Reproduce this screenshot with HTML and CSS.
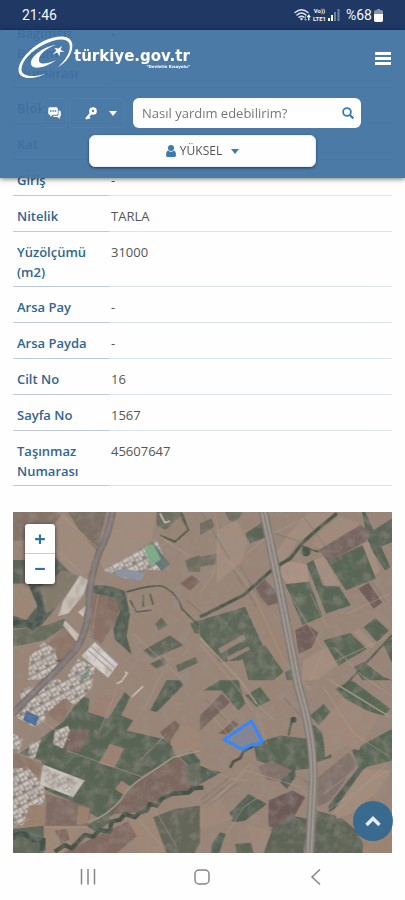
FILE: index.html
```html
<!DOCTYPE html>
<html lang="tr">
<head>
<meta charset="utf-8">
<meta name="viewport" content="width=device-width, initial-scale=1">
<title>türkiye.gov.tr</title>
<link rel="stylesheet" href="styles.css">
</head>
<body>
<div class="top">
  <div class="status">
    <span class="clock">21:46</span>
    <div class="status-icons">
      <svg class="wifi" viewBox="0 0 17 14" aria-hidden="true">
        <g fill="none" stroke="#dfe7f2" stroke-width="1.5" stroke-linecap="round"><path d="M1 4.5Q7.500-1 14 4.500M3 7Q7.500 3 12 7M5 9.300Q7.500 7.200 10 9.300"/></g>
        <circle cx="7.500" cy="11" r="1.200" fill="#dfe7f2"/>
        <path d="M11.500 8v4M10.200 11l1.300 1.700L12.800 11" fill="none" stroke="#8496b4"/>
        <path d="M14.800 12.500V7.500M13.300 9.200l1.500-1.900 1.500 1.900" fill="none" stroke="#fff" stroke-width="1.200"/>
      </svg>
      <span class="lte"><span>Vo))</span><span>LTE1</span></span>
      <svg class="signal" viewBox="0 0 12 12" aria-hidden="true"><path d="M0 9h2v3H0zM3 6h2v6H3z" fill="#fff"/><path d="M6 3h2v9H6zM9.500 0h2v12h-2z" fill="#71819e"/></svg>
      <span class="percent">%68</span>
      <svg class="battery" viewBox="0 0 9 13" aria-hidden="true"><path d="M3 0h3v1.500H3z" fill="#8792a8"/><rect x="0" y="1" width="9" height="12" rx="2" fill="#8792a8"/><path d="M0 5h9v6a2 2 0 0 1-2 2H2a2 2 0 0 1-2-2z" fill="#fff"/></svg>
    </div>
  </div>
  <header class="header">
    <div class="brand-row">
      <a class="brand" href="#" aria-label="türkiye.gov.tr">
        <svg class="mark" viewBox="0 0 56 44" aria-hidden="true">
          <path fill="#fff" fill-rule="evenodd" d="M27 38C17 43 4 44 1 37C-2 27 12 11 28 4C40-1 52-1 54 7C56 16 49 26 40 31C49 23 54 13 51 7C47 1 36 4 27 8C12 15 1 28 4 36C7 41 17 41 27 38Z"/>
          <path fill="#fff" d="M38 9C27 10 12 20 13 28C14 35 30 31 38 24C30 28 22 29 21 25C20 19 28 12 38 9Z"/>
          <path fill="#fff" d="M44 10l-1.500 4 4 1.500-4.500.5-.5 4.500-2-4-5 2 4-4-2-2.500 4 .5z"/>
        </svg>
        <span class="brand-text"><strong>türkiye.gov.tr</strong><small>"Devletin Kısayolu"</small></span>
      </a>
      <button class="menu" type="button" aria-label="Menü"><span></span><span></span><span></span></button>
    </div>
    <div class="tools">
      <button class="tool" type="button" aria-label="Mesajlar">
        <svg class="chat" viewBox="0 0 13 12" fill="#fff" aria-hidden="true"><path d="M10.500 3.500h.8A1.500 1.500 0 0 1 12.800 5v3.500A1.500 1.500 0 0 1 11.700 10v2L9.300 10H6.500A1.500 1.500 0 0 1 5 8.800h4a1.500 1.500 0 0 0 1.500-1.500z"/><path fill-rule="evenodd" d="M1.800.2h6.500a1.500 1.500 0 0 1 1.500 1.500v4.600a1.500 1.500 0 0 1-1.500 1.500H4.800L2.300 10V7.800h-.5A1.500 1.500 0 0 1 .3 6.300V1.700A1.500 1.500 0 0 1 1.800.2zM2 3.200v1.500h1.500V3.200zm2.400 0v1.500h1.400V3.200zm2.300 0v1.500h1.500V3.200z"/></svg>
      </button>
      <button class="tool tool-key" type="button" aria-label="Giriş seçenekleri">
        <svg class="key" viewBox="0 0 12 13" fill="none" stroke="#fff" aria-hidden="true"><circle cx="8" cy="4" r="2.500" stroke-width="2.700"/><path d="M6.200 6L1 12M2.500 9.500l2.200 1.800" stroke-width="2.200"/></svg>
        <span class="caret"></span>
      </button>
      <form class="search" role="search">
        <input type="search" aria-label="Arama" placeholder="Nasıl yardım edebilirim?">
        <button type="button" aria-label="Ara"><svg viewBox="0 0 12 12" fill="none" stroke="#3a7bb4" aria-hidden="true"><circle cx="5" cy="5" r="3.900" stroke-width="1.800"/><path d="M8 8l3.400 3.400" stroke-width="2.200"/></svg></button>
      </form>
    </div>
    <button class="user" type="button">
      <svg viewBox="0 0 10 12" fill="#3a7bb4" aria-hidden="true"><circle cx="5" cy="3" r="3"/><path d="M2.200 5.500Q5 8 7.800 5.500Q10 6.300 10 10.200Q10 12 8.500 12h-7Q0 12 0 10.200Q0 6.300 2.200 5.500z"/></svg>
      <span>YÜKSEL</span><span class="caret"></span>
    </button>
  </header>
</div>

<main class="content">
  <table class="details">
    <tbody>
      <tr><th scope="row">Bağımsız Bölüm Numarası</th><td>-</td></tr>
      <tr><th scope="row">Blok</th><td></td></tr>
      <tr><th scope="row">Kat</th><td></td></tr>
      <tr><th scope="row">Giriş</th><td>-</td></tr>
      <tr><th scope="row">Nitelik</th><td>TARLA</td></tr>
      <tr><th scope="row">Yüzölçümü (m2)</th><td>31000</td></tr>
      <tr><th scope="row">Arsa Pay</th><td>-</td></tr>
      <tr><th scope="row">Arsa Payda</th><td>-</td></tr>
      <tr><th scope="row">Cilt No</th><td>16</td></tr>
      <tr><th scope="row">Sayfa No</th><td>1567</td></tr>
      <tr><th scope="row">Taşınmaz Numarası</th><td>45607647</td></tr>
    </tbody>
  </table>

  <div class="map">
    <svg viewBox="39 36 1137 1021" preserveAspectRatio="xMidYMid slice" aria-hidden="true">
      <defs>
        <filter id="soft" x="0" y="0" width="1" height="1"><feGaussianBlur stdDeviation="2"/></filter>
        <filter id="grain" x="0" y="0" width="1" height="1"><feTurbulence type="fractalNoise" baseFrequency=".035" numOctaves="4" seed="4"/><feColorMatrix values="0 0 0 0 .3  0 0 0 0 .27  0 0 0 0 .24  1.200 0 0 0 -.5"/></filter>
        <pattern id="sheds" width="34" height="30" patternUnits="userSpaceOnUse" patternTransform="rotate(-28)">
          <rect width="34" height="30" fill="#9a9189"/><path d="M2 2h19v11H2zM24 3h8v17h-8zM3 17h8v9H3zM14 16h8v11h-8z" fill="#d5d0c9"/><path d="M24 24h9v4h-9zM11 13h4v3h-4z" fill="#6b6961"/>
        </pattern>
      </defs>
      <rect x="39" y="36" width="1137" height="1021" fill="#988273"/>
      <g filter="url(#soft)">
        <!-- north-west fields -->
        <g>
          <path fill="#806d61" d="M39 36h130l20 20-30 45-50 20H39z"/>
          <path fill="#a08878" d="M165 70l25-30 30 20 80 90-20 70-70 5-45-70z"/>
          <path fill="#75685c" d="M205 36h115l-15 60-10 60-60-70z"/>
          <path fill="#a18b7a" d="M345 36h125l-15 85-140 95-15-30z"/>
          <path fill="#4e5a4c" d="M39 180h40l65 60 20-70 60 60-60 100-45 50-80 5z"/>
          <path fill="#9c8370" d="M39 250h45l35 60-40 50-40-15z"/>
          <path fill="#7c7565" d="M120 260l70-50 50 20-70 90-30 20z"/>
          <path fill="#5e6654" d="M39 390l100-15 55-20 10 20-70 45-95 20z"/>
          <path fill="#8a7060" d="M150 425l45-45 40 40-20 45-50 25-30-40z"/>
          <path fill="#84695e" d="M280 280l60 10 15 60-50 80-35-20z"/>
          <path fill="#7b6355" d="M325 280l40 20-10 40-30-20z"/>
          <path fill="#46564a" d="M270 258q50-10 105 15l15 70-10 65 15 55-50-45-5-35 20-50-15-40-70-15z"/>
          <path fill="#646657" d="M470 36h75l15 50-30 20-60-30zM555 180l45-15v50h-35z"/>
          <path fill="#96806f" d="M480 105l60-55 25 45-40 30z"/>
          <path fill="#775f53" d="M540 250l35-25 25 20-30 25z"/>
          <path fill="#56614f" d="M465 370l20-18 17 22-25 17zM430 450l80-45 40 30-90 40zM450 490l40-18 10 18-30 15zM528 495l58-25 7 17-58 28z"/>
          <path fill="#57624e" d="M570 370l30-12v42h-15z"/>
        </g>
        <!-- north-east fields -->
        <g transform="translate(600)">
          <path fill="#6a685c" d="M0 70l35-15 8 25-43 25zM0 170l50-10 10 30-60 10zM75 36h55l-25 32-20-10z"/>
          <path fill="#4e5b4d" d="M135 100l55-35 10 45-50 20zM520 90l56-35v70l-35 15zM485 36h10l75 165-15 10-50-75z"/>
          <path fill="#a48c7b" d="M50 90l60-30 30 60-10 60-80 70zM265 100l60-60 80-4-60 60-55 30-40 60-30-15z"/>
          <path fill="#a18978" d="M350 100l70-50 60 20-20 25-100 50-25-10z"/>
          <path fill="#705c58" d="M355 150l125-75 30 20-15 30-110 60z"/>
          <path fill="#4c5d4b" d="M382 185l105-50 40 100-90 35zM318 190l22-10 27 75 50 5 35 55-75 25z"/>
          <path fill="#a68e7f" d="M340 180l30-10 50 85-45 3zM485 130l20-5 35 85-17 15z"/>
          <path fill="#ae9382" d="M245 190q45-10 75 5l8 50-65 5-23-25z"/>
          <path fill="#4e604c" d="M255 252l72-8 40 105-60 25z"/>
          <path fill="#6d5c58" d="M163 265l32-28 40 45 3 25-35 10z"/>
          <path fill="#67534f" d="M475 265l30-18 40 60-25 18zM285 390l35-18 35 25-20 45-40 20z"/>
          <path fill="#51604f" d="M0 360l135-40 60 130-75 30-60 5L0 405zM125 465l70-30 55 80-30 25h-75z"/>
          <path fill="#94806f" d="M55 445l75-42 8 14-77 43zM80 470l65-32 5 10-65 35z"/>
          <path fill="#9b8170" d="M145 280l20-20 100 210-15 40-60-90z"/>
          <path fill="#4e5d4b" d="M370 420l80-22 50 48-85 50zM490 380l35-27 40 38-35 35zM460 500l30-15 60 45 26 10h-90zM255 515l20-10 10 35h-25zM548 430l28-15v75z"/>
          <path fill="#a58c7c" d="M455 395l20-10 50 50-15 10zM310 480l70-40 30 55-60 45h-45z"/>
        </g>
        <!-- south-west fields -->
        <g transform="translate(0 540)">
          <path fill="#8c7063" d="M140 100l35-55 45 20-35 65zM39 215l85 35-5 35-80-20z"/>
          <path fill="#4c5c4b" d="M190 125l55-78 25 8-5 40 60 20 50-80 15 15-25 55 35 15-20 30 130 30 25 65-120 65-55 80-50 30-100-60-90-40 15-20-10-60-65-20z"/>
          <path fill="#715c54" d="M205 145l65 5-30 65-60-15z"/>
          <path fill="#9b7d6c" d="M270 90l25-45h55l-28 70zM330 190l43 14-30 58-47-14zM345 325l20-25 30 20-20 25z"/>
          <path fill="#47594a" d="M450 90l50-90h40l10 15-80 80zM540 230l30-25 30 35v5l-35 10z"/>
          <path fill="#735e54" d="M480 155l45-35 15 15-35 55z"/>
          <path fill="#9f8371" d="M510 190l40-60 50 25v45l-60 30z"/>
          <path fill="#746057" d="M375 340l60-60 100-50 65 60-15 40-80 5-80 60-90 5z"/>
          <path fill="#5a6454" d="M550 260l50-15v75l-25 3z"/>
          <path fill="#7a645c" d="M140 340l135 40-10 55H135z"/>
          <path fill="#9a7b66" d="M85 375l55 5-5 55-55-2zM235 375l35 8-5 45-35 5z"/>
          <path fill="#53604f" d="M39 445l93-10v82H39zM260 435l55-35 20 20-45 35z"/>
          <path fill="#9f846f" d="M135 438h110l-30 50-25 29h-55zM385 420l75-50 35 90v57h-80z"/>
          <path fill="#7b6259" d="M165 450l35-5 10 30-25 15zM190 517l120-60 75-35 25 45-60 50z"/>
          <path fill="#585d50" d="M460 410l65-25 75-10v110l-15 32h-85z"/>
        </g>
        <!-- south-east fields -->
        <g transform="translate(600 540)">
          <path fill="#4c5e4b" d="M10 30l50-30h55l20 70-20 20-50-60zM135 45l45-25 30 40-40 20zM405 25l50-25 115 85-20 20-90-25zM330 105l40-35 20 25-35 40zM455 210l121-65v95l-100 25z"/>
          <path fill="#6d5b53" d="M0 105l65-65 25 25-90 85zM55 160l45-40 15 12-35 30z"/>
          <path fill="#4e5b4c" d="M160 190l80-25 80 10 15 90-70 5-95-30zM335 130l25 20 35 80-45 15z"/>
          <path fill="#7b6c65" d="M175 260l40-20 60 30-30 35-50-10zM355 290l90-75 25 35-80 110-40 20z"/>
          <path fill="#46574b" d="M0 255l40 15 25 5-65 35zM385 375l90-115 25-5-90 125-25 15zM80 405l65-65 55 30-65 50-35 5zM240 305l45-45v30l-25 35zM35 490l25-35 17 5-20 57H33z"/>
          <path fill="#64504d" d="M205 360l70-30 40 20-35 60-50 40-25-15z"/>
          <path fill="#515c4e" d="M200 455l75-50 50 10-15 102H190zM350 390l70 20 50 40 30 67H340zM105 490l60-5 5 32h-60z"/>
          <path fill="#a48b79" d="M400 390l90-125 85 5-45 65-80 65-40 15z"/>
          <path fill="#a08674" d="M365 130l60-80 110 60-60 100-40-15-60 35zM140 430l75 20-25 67h-30zM0 380l60-20 40 55-70 25H0z"/>
          <path fill="#9b806a" d="M490 475l86-15v57h-90z"/>
        </g>
        <!-- plough lines and tracks -->
        <g fill="none" stroke="#b5a08e" stroke-width="3" opacity=".55">
          <path d="M170 150l100 90M190 50l110 100M345 210l170-90M295 285l-20 120M390 280q-15 50 30 50l60-20M480 110l90 60M400 400l150 140M640 40q30 60 0 180l-40 60M680 170l80 110 90 200 80 90M860 270l110 180-40 90M740 160l60-50 120-60M930 280l50 100M970 500l190-90M1000 440l90 90 90 60M1040 340l130-60M300 690l50-120M430 630l60-120M600 430l110 130 50 70M760 600l60 60M640 650l50 60M650 620l60 70M640 900l110-110M620 920l120-110M200 750l230 80M100 640l110 80M600 790q80 50 140 50M740 810l160 50 60 70M980 930l180-120M1000 940l160-150M1050 820l-80 60M970 560l90 140 110 70M680 1000l50-80 60-40M135 980h130M180 980l-10 70M500 700l-80 80M400 940l90 100M450 900l80 140M770 640l30 90"/>
        </g>
        <path d="M600 30l90 150M790 90l110 35M720 200l70 110M700 210l70 110M910 50l110 150M1070 180l90 130M560 300l80 70M620 600l60 60M850 590l100 110M880 820l80 50M600 900l90-70M610 910l90-70M620 920l90-70" fill="none" stroke="#6c6257" stroke-width="3" opacity=".5"/>
        <path d="M39 1015q20-30 60 0l30 5v30M39 370q40-10 60 10 35-25 20-70l-20-50" fill="none" stroke="#33463f" stroke-width="17"/>
        <path d="M380 275q100-30 120-10 35 20 45 60l50 50M390 300l20 35 45-5M430 285v35M450 280l10 35M140 430q0 60 50 50l45-40" fill="none" stroke="#4a5145" stroke-width="5"/>
        <path d="M600 350l60-30 70-35 90-80 50-30 40-50 50-45 50-40" fill="none" stroke="#3e4d40" stroke-width="10"/>
        <path d="M900 135q20 10 55 20M480 105l45 20 40-35-20-50M1020 570l155-165" fill="none" stroke="#46533f" stroke-width="6"/>
        <path d="M165 1053l30-20 20 10 20-20 20-20 25 5 20-20 30 5 5-30 25-5 15-18 30 10 15-15 20-5 10-20 20 5 15-20 30-15 20-2 30-2 15-13 30-2" fill="none" stroke="#354638" stroke-width="13" stroke-linejoin="round"/>
        <path d="M690 801l10-18 20-10 10-20 30-16" fill="none" stroke="#3d4b3b" stroke-width="8"/>
        <circle cx="917" cy="155" r="14" fill="#344a3b"/><circle cx="880" cy="658" r="9" fill="#344a3b"/>
        <path d="M875 660l-10 45" stroke="#3e4c3d" stroke-width="6"/>
        <!-- built-up areas -->
        <path fill="#d0c9be" d="M240 225l25 15-15 45-45 55-30 8 15-45zM195 360l50 50-10 20-45-55zM235 335l25-20-10 35z"/>
        <path fill="url(#sheds)" d="M90 470l40-45 35 20 10 40-25 50-65 5zM195 540l40-65 50 25-10 65-50 50-50-35zM60 570l60-20 55-15 45 35-80 70-75-35zM48 650l45-45 35 15 10 40-35 20zM39 700l30 10-10 50-20-20zM90 730l35-15-20 60-20-5zM165 690l40-15 5 15-20 55-30-15zM39 805l45-5 50 60 0 50-45 5-20 60-30-10z"/>
        <path fill="#d1ccc3" d="M130 792l125 48-35 50-100-38z"/>
        <path fill="url(#sheds)" opacity=".55" d="M140 805l90 35-20 38-75-32z"/>
        <path fill="#3e67a0" d="M80 630l38 20-10 27-38-18z"/>
        <path fill="url(#sheds)" d="M315 205l155-85 30 70-25 22-45-5-45 30-70-25z"/>
        <path fill="#59716e" d="M455 122l55 70-25 20-35-40z"/>
        <path fill="#78b08a" d="M433 145l27-13 23 45-30 20z"/>
        <path fill="#8596a8" d="M345 210l30-5 60 15-10 22-75-15z"/>
        <path fill="#e0dbd6" d="M285 425l70 65-30 42-80-65z"/>
        <path fill="none" stroke="#99919d" stroke-width="3" d="M275 440l70 62M265 450l70 62M293 431l60 58"/>
        <path fill="#658f78" d="M245 525l25-20-5 25-25 15z"/>
        <path fill="none" stroke="#d1cac0" stroke-width="5" d="M350 550l15-7 17-25-7-3M395 590l35-33M480 40l15 28 15-5"/>
        <!-- roads -->
        <path fill="none" stroke="#6e675f" stroke-width="21" d="M338 36q-10 65-40 120-25 70-30 135 5 75-35 150-50 60-115 120L39 640"/>
        <path fill="none" stroke="#80777c" stroke-width="12" d="M338 36q-10 65-40 120-25 70-30 135 5 75-35 150-50 60-115 120L39 640"/>
        <path fill="none" stroke="#77716b" stroke-width="27" d="M790 36q20 90 40 190l65 335q50 160 43 300-6 100-10 196"/>
        <path fill="none" stroke="#a19b97" stroke-width="18" d="M790 36q20 90 40 190l65 335q50 160 43 300-6 100-10 196"/>
        <path fill="none" stroke="#77736f" stroke-width="4" d="M790 36q20 90 40 190l65 335q50 160 43 300-6 100-10 196"/>
        <path fill="none" stroke="#a59885" stroke-width="5" d="M600 413l120 127 50 70M265 965q60-20 100-70 10-25 50-55l105-70 80-20M39 980l50-25M990 540l180 110"/>
      </g>
      <rect x="39" y="36" width="1137" height="1021" filter="url(#grain)"/>
      <rect x="39" y="36" width="1137" height="1021" fill="#a0948c" opacity=".16"/>
      <path class="parcel" d="M672 717l82-55 32 60-20 12-10-2-29 15z"/>
    </svg>
    <div class="zoom"><button type="button" aria-label="Yakınlaştır">+</button><button type="button" aria-label="Uzaklaştır">−</button></div>
  </div>
</main>

<button class="to-top" type="button" aria-label="Yukarı çık"><svg viewBox="0 0 16 11" fill="none" stroke="#e8edf1" stroke-width="3.500" aria-hidden="true"><path d="M1.500 9L8 2.500 14.500 9"/></svg></button>

<nav class="system-nav" aria-label="Sistem">
  <button type="button" aria-label="Son uygulamalar"><svg viewBox="0 0 16 16" aria-hidden="true"><path d="M1.500 0v15.500M8 0v15.500M14.500 0v15.500"/></svg></button>
  <button type="button" aria-label="Ana ekran"><svg viewBox="0 0 16 16" aria-hidden="true"><rect x="1" y="1" width="14" height="14" rx="4"/></svg></button>
  <button type="button" aria-label="Geri"><svg viewBox="0 0 16 16" aria-hidden="true"><path d="M12 .5L4 8l8 7.500"/></svg></button>
</nav>
</body>
</html>
```
FILE: styles.css
```css
* { box-sizing: border-box; }

body {
  margin: 0;
  background: #fefefe;
  color: #555;
  font: 13px/20px "Open Sans", "Noto Sans", sans-serif;
}

button {
  padding: 0;
  border: 0;
  background: none;
  color: inherit;
  font: inherit;
}

svg { display: block; }

.top {
  position: fixed;
  z-index: 2;
  top: 0;
  left: 0;
  right: 0;
}

.status {
  display: flex;
  align-items: center;
  justify-content: space-between;
  height: 30px;
  padding: 0 22px;
  background: #1f3864;
  color: #f4f7fb;
  font-family: Roboto, sans-serif;
  font-size: 14px;
}

.status-icons { display: flex; align-items: center; gap: 2px; }
.wifi { width: 17px; height: 14px; }
.lte { display: grid; font-size: 6px; font-weight: 700; line-height: 8px; text-align: center; }
.signal { width: 12px; height: 12px; }
.percent { margin-left: 4px; }
.battery { width: 9px; height: 13px; }

.header {
  padding: 6px 14px 11px;
  background: rgba(62, 112, 160, 0.93);
  box-shadow: 0 1px 5px rgba(0, 0, 0, 0.55);
}

.brand-row {
  display: flex;
  align-items: center;
  justify-content: space-between;
  padding-left: 4px;
}
.brand { display: flex; align-items: center; color: #fff; text-decoration: none; }
.mark { width: 56px; height: 44px; }
.brand-text { display: grid; font-family: "DejaVu Sans", sans-serif; line-height: 18px; }
.brand-text strong { font-size: 15px; }
.brand-text small { font-size: 4px; font-weight: 700; line-height: 4px; text-align: right; }

.menu { display: grid; gap: 2px; width: 16px; }
.menu span { height: 3px; background: #fff; }

.tools { display: flex; gap: 2px; margin: 18px 30px 7px 28px; }
.tool {
  display: flex;
  align-items: center;
  justify-content: center;
  width: 25px;
  height: 30px;
  border: 1px solid #507fab;
  border-radius: 5px;
}
.tool-key { gap: 12px; width: 56px; margin-right: 6px; padding-left: 8px; }
.chat { width: 13px; height: 12px; }
.key { width: 12px; height: 13px; }

.caret {
  border: 4px solid transparent;
  border-top: 5px solid currentColor;
  border-bottom: 0;
  color: #fff;
}

.search {
  display: flex;
  flex: 1;
  height: 30px;
  border-radius: 6px;
  background: #fff;
}
.search input {
  flex: 1;
  min-width: 0;
  padding: 0 0 0 9px;
  border: 0;
  background: none;
  font: inherit;
}
.search input::placeholder { color: #777; opacity: 1; }
.search button { padding: 0 7px; }
.search svg { width: 12px; height: 12px; }

.user {
  display: flex;
  align-items: center;
  justify-content: center;
  gap: 4px;
  width: 60%;
  height: 32px;
  margin: 0 auto;
  border: 1px solid #e8eef4;
  border-radius: 6px;
  background: #fefefe;
  box-shadow: 0 1px 3px rgba(0, 0, 0, 0.5);
  font-size: 12px;
}
.user svg { width: 10px; height: 12px; }
.user .caret { margin-left: 5px; color: #3a7bb4; }

.content { padding: 13px 13px 0; }

.details { width: 100%; border-collapse: separate; border-spacing: 0; }
.details th,
.details td {
  height: 36px;
  padding: 10px 2px 4px;
  border-bottom: 1px solid #dce4ef;
  text-align: left;
  vertical-align: top;
}
.details th {
  width: 96px;
  padding: 10px 4px 4px;
  border-color: #bccadc;
  color: #2f6594;
  font-weight: 600;
}

.map { position: relative; margin-top: 26px; }
.map > svg { width: 100%; aspect-ratio: 379 / 341; }
.parcel { fill: #3388ff; fill-opacity: 0.2; stroke: #3388ff; stroke-width: 9; stroke-linejoin: round; }

.zoom {
  position: absolute;
  top: 12px;
  left: 12px;
  display: grid;
  width: 30px;
  border-radius: 3px;
  background: #fff;
  box-shadow: 0 1px 4px rgba(0, 0, 0, 0.6);
  color: #2d72af;
  font-size: 20px;
  font-weight: 700;
}
.zoom button { height: 30px; }
.zoom button:first-child { border-bottom: 1px solid #ccc; }

.to-top {
  position: fixed;
  right: 12px;
  bottom: 59px;
  display: grid;
  place-items: center;
  width: 40px;
  height: 40px;
  border-radius: 50%;
  background: rgba(43, 103, 146, 0.88);
}
.to-top svg { width: 16px; height: 11px; }

.system-nav {
  display: flex;
  align-items: center;
  justify-content: space-between;
  height: 48px;
  padding: 0 81px 0 80px;
}
.system-nav svg { width: 16px; height: 16px; fill: none; stroke: #858585; stroke-width: 1.5; }
```
